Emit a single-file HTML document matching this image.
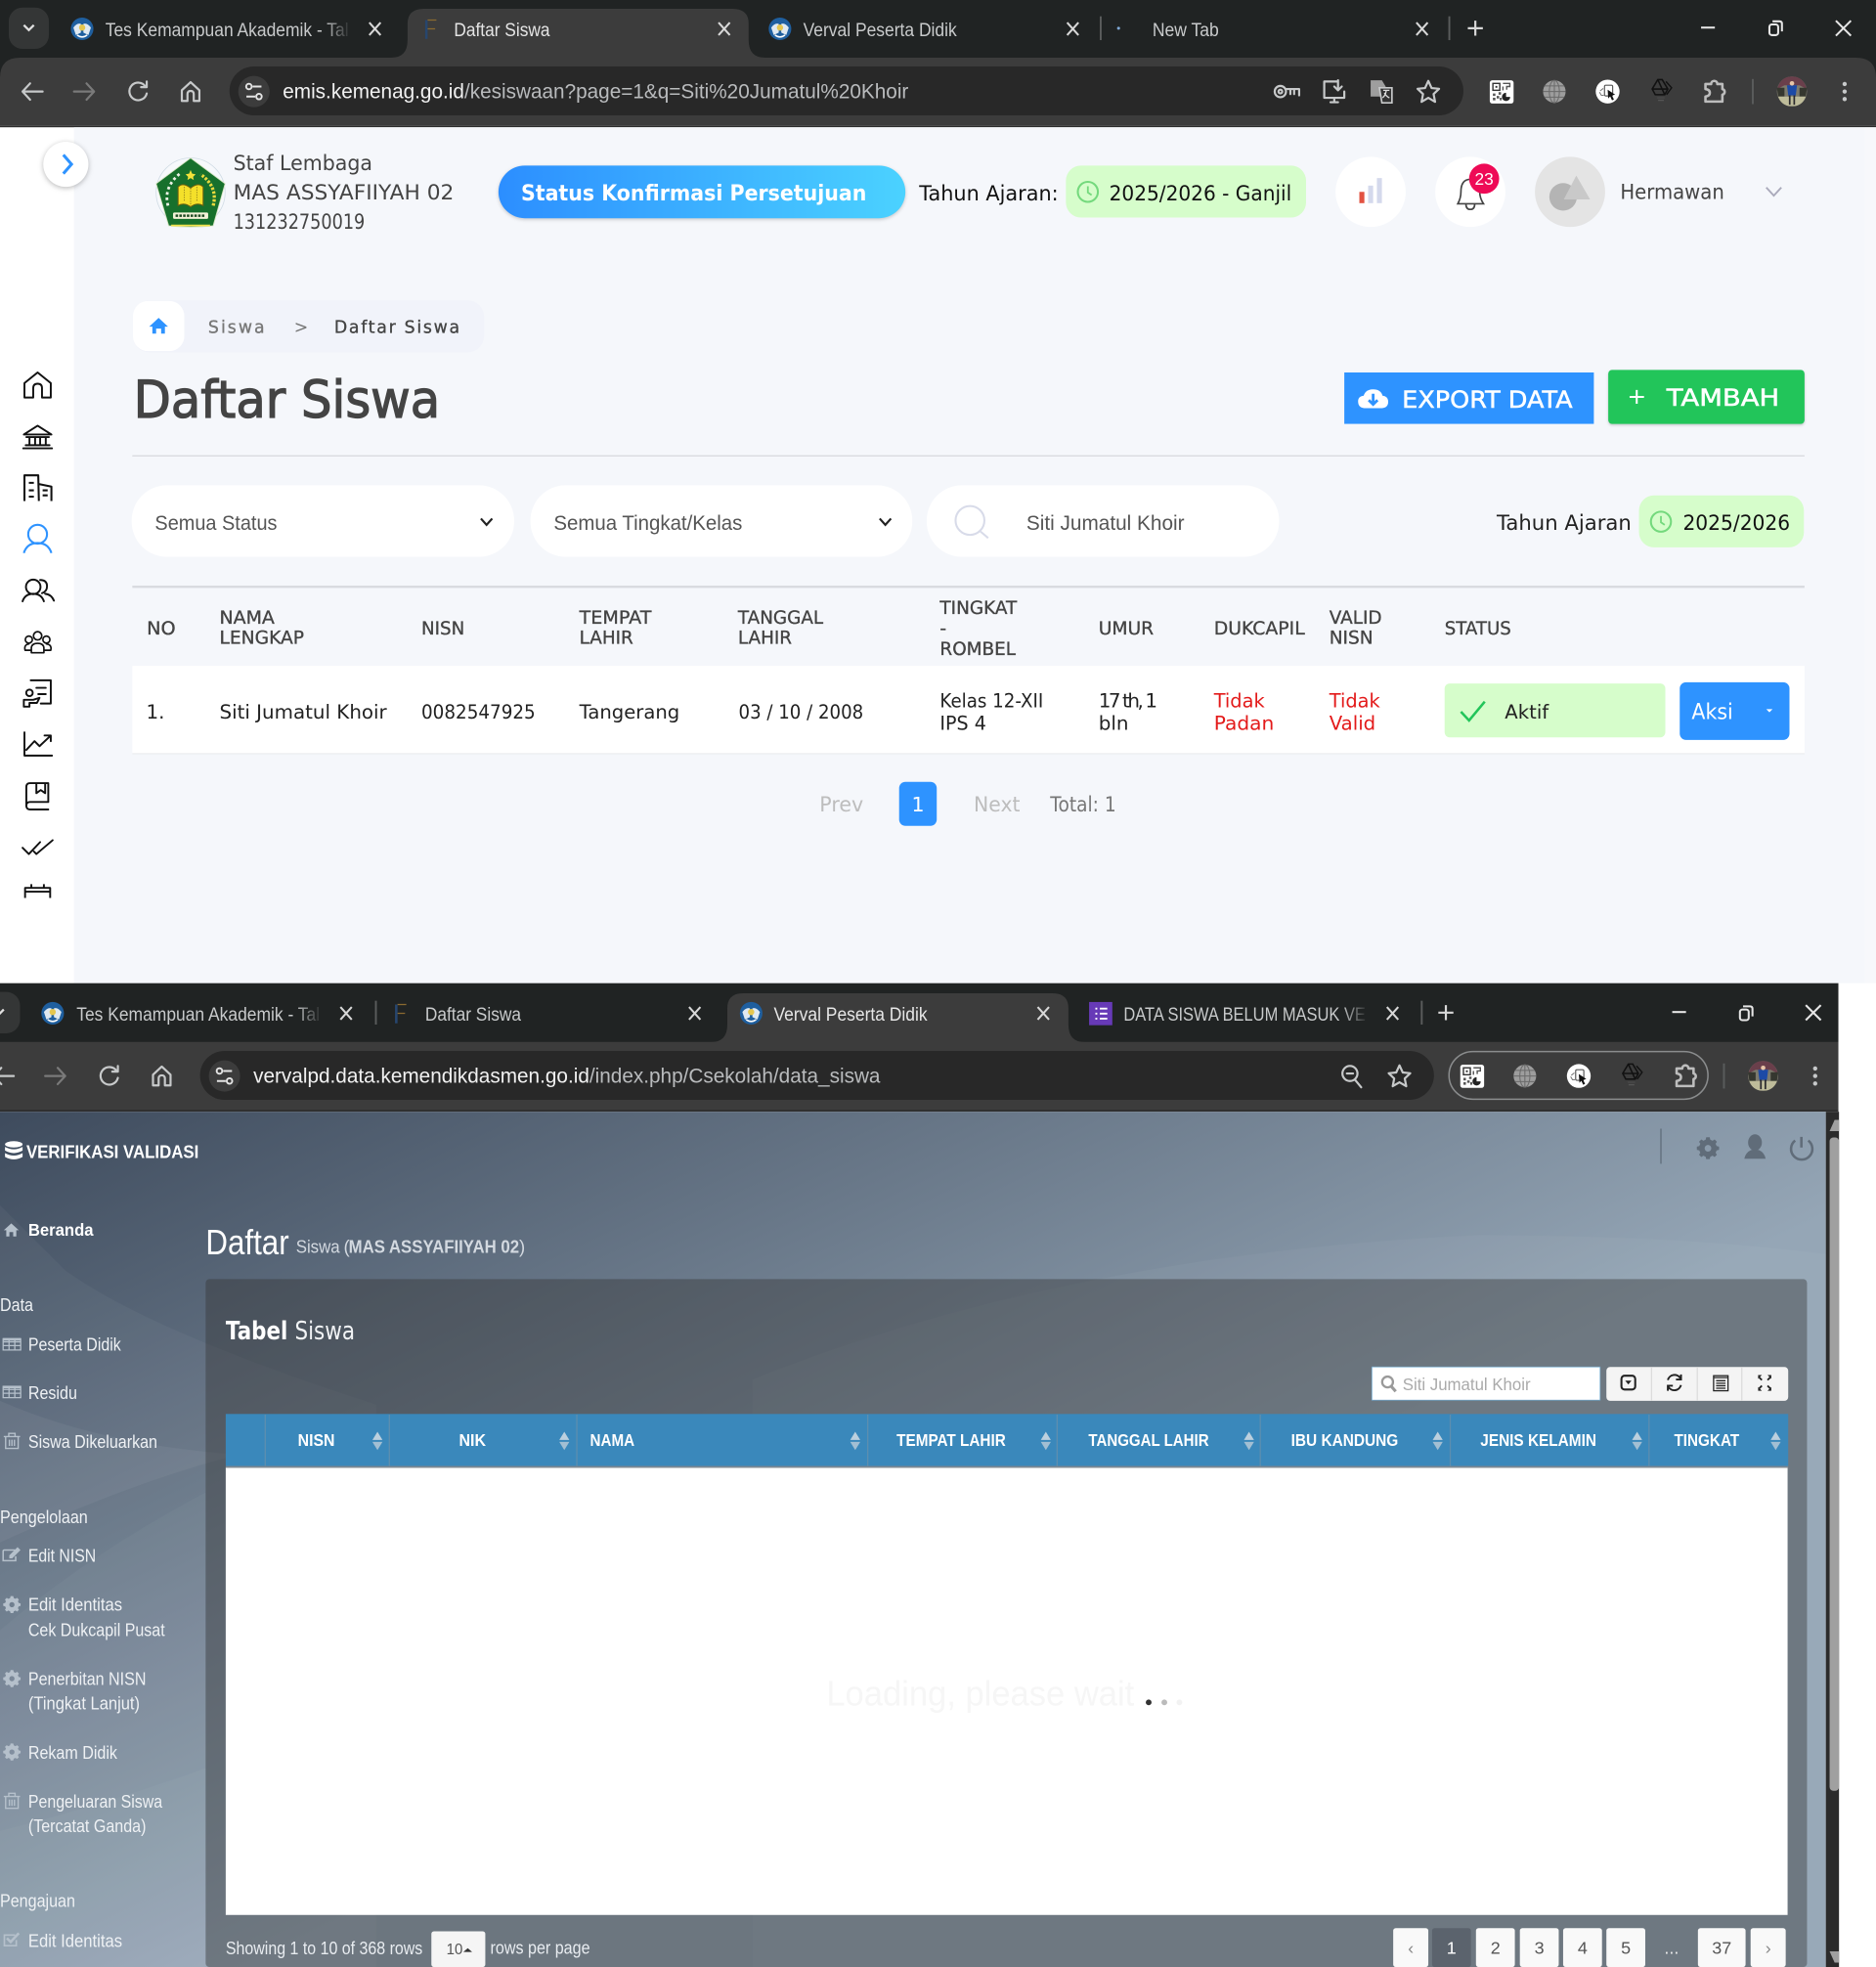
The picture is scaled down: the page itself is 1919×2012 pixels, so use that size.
<!DOCTYPE html>
<html><head><meta charset="utf-8"><title>Daftar Siswa</title>
<style>
html,body{margin:0;padding:0;background:#fff;width:1919px;height:2012px;overflow:hidden}
svg{display:block}
.c{font-family:"Liberation Sans",sans-serif;font-size:15px;fill:#c8cacb}
.u{font-family:"Liberation Sans",sans-serif;font-size:16.5px;fill:#b9bbbd}
.m{font-family:"DejaVu Sans",sans-serif;font-size:15.5px;fill:#222}
.h{font-family:"DejaVu Sans",sans-serif;font-size:14.5px;fill:#444;stroke:#444;stroke-width:.25}
.n{font-family:"Liberation Sans",sans-serif;font-size:17px;fill:#555}
.s{font-family:"Liberation Sans",sans-serif;font-size:14.5px;fill:#eef1f4}
.o{font-family:"Liberation Sans",sans-serif;font-size:14.5px;fill:#fff;font-weight:bold}
.ch{fill:none;stroke:#c7c9ca;stroke-width:1.7;stroke-linecap:round;stroke-linejoin:round}
.sb{fill:none;stroke:#111;stroke-width:1.5;stroke-linejoin:round;stroke-linecap:round}
</style></head><body>
<svg xmlns="http://www.w3.org/2000/svg" width="1919" height="2012" viewBox="0 0 1496 1568.5">
<defs>
<linearGradient id="st" x1="0" x2="1" y1="0" y2="0"><stop offset="0" stop-color="#2c8eff"/><stop offset="1" stop-color="#4bd2ff"/></linearGradient>
<linearGradient id="bg" gradientUnits="userSpaceOnUse" x1="0" y1="886" x2="300" y2="1519"><stop offset="0" stop-color="#3e4b5d"/><stop offset="1" stop-color="#95a6b6"/></linearGradient>
<linearGradient id="fd" x1="0" x2="1" y1="0" y2="0"><stop offset="0" stop-color="#202323" stop-opacity="0"/><stop offset="1" stop-color="#202323"/></linearGradient>

<g id="x"><path d="M-4.500 -5L4.500 5M4.500 -5L-4.500 5" fill="none" stroke="#d8d8d8" stroke-width="1.600"/></g>
<g id="tw"><circle r="9" fill="#1f5f9f"/><path d="M-7 -1Q-4 -5 -1 -4V3L-5 5ZM7 -1Q4 -5 1 -4V3L5 5Z" fill="#dfe9f2"/><circle cy="-1" r="2.500" fill="#e5c64f"/><path d="M-4 5Q0 8 4 5" stroke="#fff" stroke-width="1.200" fill="none"/></g>
<g id="ef"><path d="M-5 -8H-3V7H-5Z" fill="#27466e"/><path d="M-3 -8H4M-3 -1H3" stroke="#8a6a30" stroke-width="1" fill="none"/></g>
<g id="back"><path class="ch" d="M8 0H-8M-2 -6.500L-8 0L-2 6.500"/></g>
<g id="fwd"><path class="ch" style="stroke:#7a7a7a" d="M-8 0H8M2 -6.500L8 0L2 6.500"/></g>
<g id="rel"><path class="ch" d="M6 -4A7 7 0 1 0 7 1.500M7 -8V-3.500H2.500"/></g>
<g id="home"><path class="ch" d="M-7 -1L0 -7.500L7 -1V7.500H2.500V2Q2.500 -.500 0 -.500 -2.500 -.500 -2.500 2V7.500H-7Z"/></g>
<g id="info"><circle r="12.500" fill="#3c3c3c"/><path d="M-1 -4H6M1 4H-6" stroke="#e4e4e4" stroke-width="1.600"/><circle cx="-4" cy="-4" r="2.200" fill="none" stroke="#e4e4e4" stroke-width="1.500"/><circle cx="4" cy="4" r="2.200" fill="none" stroke="#e4e4e4" stroke-width="1.500"/></g>
<g id="star"><path class="ch" d="M0 -8.500L2.600 -2.800 8.600 -2.200 4.200 2 5.400 8.200 0 5 -5.400 8.200 -4.200 2 -8.600 -2.200 -2.600 -2.800Z"/></g>
<g id="qr"><rect x="-9.500" y="-9" width="19" height="18.500" rx="2" fill="#fff"/><rect x="-7" y="-6.500" width="5.500" height="5.500" fill="none" stroke="#333" stroke-width="1.100"/><rect x="-5" y="-4.500" width="1.500" height="1.500" fill="#333"/><path d="M1 -6.500H6.500V-4H4V-1.500M1 -4V-1" fill="none" stroke="#555" stroke-width="1.100"/><path d="M-7 1.500h2v2h-2zM-4 3.500h2v2h-2zM-7 5h2v2h-2zM-2.500 .500h2v2h-2zM-1.500 5h1.500v2h-1.500z" fill="#555"/><path d="M3.500 1A3.300 3.300 0 1 0 6.800 4.300H3.500Z" fill="#222"/></g>
<g id="gl"><circle r="9" fill="#9d9d9d"/><ellipse rx="4" ry="9" fill="none" stroke="#6a6a6a" stroke-width=".8"/><path d="M-9 0H9M-8 -4.500H8M-8 4.500H8M0 -9V9" stroke="#6a6a6a" stroke-width=".8"/></g>
<g id="cur"><circle r="9.500" fill="#fff"/><rect x="-2.500" y="-5" width="6.500" height="8.500" rx="1" fill="none" stroke="#555" stroke-width=".9"/><path d="M-6 -.500L-3.500 -2.500M-6.500 .500L-5 3 -3 3" fill="none" stroke="#777" stroke-width=".8"/><path d="M0 -1.500L6 2.500 3.400 3 5 6.300 3.500 7 2 3.800 .500 5.500Z" fill="#111"/></g>
<g id="dr"><path d="M-2.500 -8.500H1L5.500 -1 3 3.500H-4.500L-7 -1ZM-2.500 -8.500L3 3.500M-7 -1H5.500" fill="none" stroke="#111" stroke-width="1.200"/><path d="M4 -7L8.500 -2 4.500 3.500" fill="none" stroke="#111" stroke-width="1.100"/><rect x="-3" y="5.500" width="6" height="1" fill="#4a4a4a"/><rect x="-2.300" y="7.500" width="4.600" height="1" fill="#555"/></g>
<g id="pz"><path fill="none" stroke="#bdbdbd" stroke-width="2" stroke-linejoin="round" d="M-7 -6H-2.500A2.300 2.300 0 0 1 2.500 -6H6.500V-2A2.300 2.300 0 0 1 6.500 2.500V8H-7V4Q-3.500 3.500 -3.500 1 -3.500 -1.500 -7 -2Z"/></g>
<g id="ava"><circle r="12" fill="#7c7a6d"/><path d="M-11.800 -2Q-9 -12 0 -12 9 -12 11.800 -2L6 -5H-6Z" fill="#6a3f4b"/><path d="M-12 -3H-6V4H-11ZM12 -3H6V4H11Z" fill="#35372f"/><path d="M-4 -5L4 -5 3 3H-3Z" fill="#1d4aa6"/><circle cy="-6.500" r="1.800" fill="#e8c6a8"/><path d="M-2 3V10M2 3V10" stroke="#23252b" stroke-width="1.300"/><path d="M-11 4H11Q9 10 3 11.500H-3Q-9 10 -11 4Z" fill="#c5c39f" fill-opacity=".9"/><path d="M-1.800 3V10.500M1.800 3V10.500" stroke="#2a2a2e" stroke-width="1.300"/></g>
<g id="dots"><circle cy="-6" r="1.700" fill="#c7c9ca"/><circle r="1.700" fill="#c7c9ca"/><circle cy="6" r="1.700" fill="#c7c9ca"/></g>
<g id="min"><path d="M-5.500 0H5.500" stroke="#e6e6e6" stroke-width="1.600"/></g>
<g id="rst"><rect x="-5" y="-3" width="7" height="8.500" rx="2" fill="none" stroke="#e6e6e6" stroke-width="1.600"/><path d="M-2.500 -5.500H3Q5 -5.500 5 -3.500V2.500" fill="none" stroke="#e6e6e6" stroke-width="1.600"/></g>
<g id="bx"><path d="M-6 -6L6 6M6 -6L-6 6" stroke="#e6e6e6" stroke-width="1.600"/></g>
<g id="pl"><path d="M-6 0H6M0 -6V6" stroke="#d8d8d8" stroke-width="1.700"/></g>
<g id="clk"><circle r="8" fill="none" stroke="#74d97d" stroke-width="1.600"/><path d="M0 -4.500V0.500L3 2.500" fill="none" stroke="#74d97d" stroke-width="1.400"/></g>
<g id="srt"><path d="M-4 -.800L0 -7.300 4 -.800Z" fill="#bcd0de"/><path d="M-4 .800L0 7.300 4 .800Z" fill="#a2bfd3"/></g>
<g id="tb"><path d="M-7 -4H7V5H-7ZM-7 -1.500H7M-7 1.500H7M-2.300 -4V5M2.300 -4V5" fill="none" stroke="#b5c0cb" stroke-width="1"/><rect x="-7" y="-4.500" width="14" height="2" fill="#b5c0cb"/></g>
<g id="tr"><path d="M-5 -3.500H5V6H-5ZM-6.500 -3.500H6.500M-2.500 -3.500V-6H2.500V-3.500M-2 -1V4M0 -1V4M2 -1V4" fill="none" stroke="#b5c0cb" stroke-width="1.100"/></g>
<path id="gr" d="M-1.200 -6.500H1.200L1.600 -4.800 3.200 -4.100 4.600 -5 6.200 -3.400 5.300 -2 6 -.400 7.700 0V2.200L6 2.600 5.300 4.200 6.200 5.600 4.600 7.200 3.200 6.300 1.600 7 1.200 8.600H-1.200L-1.600 7-3.200 6.300-4.600 7.200-6.200 5.600-5.300 4.200-6 2.600-7.700 2.200V0L-6 -.400-5.300 -2-6.200 -3.400-4.600 -5-3.200 -4.100-1.600 -4.800ZM0 -1.200A2.300 2.300 0 1 0 .01 -1.200Z" fill-rule="evenodd" transform="translate(0,-1)"/>
</defs>

<!-- ===== WINDOW 1 ===== -->
<rect width="1496" height="1568.5" fill="#fff"/>
<rect width="1496" height="64" fill="#202323"/>
<rect x="7" y="6" width="32" height="33" rx="11" fill="#343636"/>
<path d="M19 20L23 24 27 20" fill="none" stroke="#e0e0e0" stroke-width="1.800"/>
<use href="#tw" x="65.500" y="23"/>
<text class="c" x="84" y="29" textLength="194" lengthAdjust="spacingAndGlyphs">Tes Kemampuan Akademik - Tal</text>
<rect x="258" y="12" width="22" height="24" fill="url(#fd)"/>
<use href="#x" x="299" y="23"/>
<path d="M312 46Q325 46 325 32V19Q325 7 338 7H584Q597 7 597 19V32Q597 46 610 46Z" fill="#3c3c3c"/>
<use href="#ef" x="344" y="24"/>
<text class="c" x="362" y="29" textLength="76.500" lengthAdjust="spacingAndGlyphs" style="fill:#e4e4e4">Daftar Siswa</text>
<use href="#x" x="577.500" y="23"/>
<use href="#tw" x="622" y="23"/>
<text class="c" x="640.500" y="29" textLength="122.500" lengthAdjust="spacingAndGlyphs">Verval Peserta Didik</text>
<use href="#x" x="855.500" y="23"/>
<rect x="877" y="13" width="1.500" height="19" fill="#5a5c5c"/>
<circle cx="892" cy="22.500" r="1.200" fill="#7fa9d6"/>
<text class="c" x="919" y="29" textLength="53" lengthAdjust="spacingAndGlyphs">New Tab</text>
<use href="#x" x="1134" y="23"/>
<rect x="1155" y="13" width="1.500" height="19" fill="#5a5c5c"/>
<use href="#pl" x="1176.500" y="22.500"/>
<use href="#min" x="1362" y="22"/><use href="#rst" x="1416" y="22.500"/><use href="#bx" x="1470" y="22.500"/>

<path d="M0 62Q0 46 16 46H1480Q1496 46 1496 62V100H0Z" fill="#3c3c3c"/>
<rect y="100" width="1496" height="1.500" fill="#2e2e2e"/>
<rect x="183" y="53" width="984" height="39" rx="19.500" fill="#282828"/>
<use href="#back" x="26" y="73"/><use href="#fwd" x="67" y="73"/><use href="#rel" x="110" y="73"/><use href="#home" x="152" y="73"/>
<use href="#info" x="202.500" y="73"/>
<text class="u" x="225.500" y="78.500" textLength="499" lengthAdjust="spacingAndGlyphs"><tspan style="fill:#f1f1f1">emis.kemenag.go.id</tspan>/kesiswaan?page=1&amp;q=Siti%20Jumatul%20Khoir</text>
<g class="ch" transform="translate(1026,73)"><circle cx="-5" cy="0" r="4.500"/><circle cx="-5" cy="0" r="1.500"/><path d="M-.5 -2H10V3M6 -2V2M3 -2V2"/></g>
<g class="ch" transform="translate(1064,73)"><path d="M2 -8H-8V5H8V0M-3 8.500H3M0 5V8.500"/><path d="M3 -9V-1M0 -4L3 -1 6 -4"/></g>
<g transform="translate(1101,73)"><path d="M-8 -9H1L4 -4V4H-8Z" fill="#9e9e9e"/><path d="M-1 -3H9V9H1Z" fill="#333" stroke="#c7c9ca" stroke-width="1.300"/><path d="M2 -1H7M4.500 -1Q4 3 1.500 5M3 1Q4.500 4 7 5" stroke="#ddd" fill="none"/></g>
<use href="#star" x="1139" y="73"/>
<use href="#qr" x="1197.500" y="73"/><use href="#gl" x="1239.500" y="73"/><use href="#cur" x="1282" y="73"/><use href="#dr" x="1324.500" y="72"/><use href="#pz" x="1367" y="73"/>
<rect x="1397" y="63" width="1.500" height="20" fill="#5a5c5c"/>
<use href="#ava" x="1429" y="73"/><use href="#dots" x="1471" y="73"/>

<!-- page 1 body -->
<rect x="59" y="101.500" width="1428" height="682.500" fill="#f5f7fb"/>
<rect x="1487" y="101.500" width="9" height="682.500" fill="#f7f8fb"/>
<circle cx="52.500" cy="131" r="18" fill="#fff" style="filter:drop-shadow(0 1px 2px rgba(0,0,0,.28))"/>
<path d="M50.500 123.500L57 131 50.500 138.500" fill="none" stroke="#2e93ff" stroke-width="2.400"/>

<!-- sidebar icons -->
<path class="sb" d="M19.500 305L30 296.500 40.500 305V316.500H33.500V309Q33.500 305.500 30 305.500 26.500 305.500 26.500 309V316.500H19.500Z" transform="translate(0,.5)"/>
<path class="sb" d="M19 346.500L30 339.500 41 346.500ZM21 348.500H39M23.500 349V354.500M28 349V354.500M32 349V354.500M36.500 349V354.500M20.500 355H39.500M18.500 357.500H41.500"/>
<path class="sb" style="stroke-linecap:butt;stroke-width:1.600" d="M19.500 399.500V379H30.500L31 399.500M31 386L41 388V399.500M23 385H27M23 391H27M23 396H27M34 391H38M34 395H38"/>
<g fill="none" stroke="#2e93ff" stroke-width="1.600"><circle cx="30" cy="426" r="7.500"/><path d="M19 441Q21.500 433 30 433 38.500 433 41 441"/></g>
<g class="sb"><circle cx="26.500" cy="468" r="5.800"/><path d="M18 479.500Q20 473.500 26.500 473.500 33 473.500 35 479.500M32 462.500Q37.500 462.500 37.500 467.500 37.500 471.500 33.500 473M36 473.500Q41 474 43 479"/></g>
<g class="sb" style="stroke-width:1.300"><circle cx="30" cy="507" r="3.300"/><circle cx="23" cy="510" r="2.800"/><circle cx="37" cy="510" r="2.800"/><path d="M25 520.500V517Q25 513 30 513 35 513 35 517V520.500ZM25 518.500H20Q19 514 23 513.500M35 518.500H40.500Q41.500 514 37 513.500"/></g>
<g class="sb" transform="translate(-.5,-.5)"><path d="M25 543H41V561.500H33M29.500 549H37M31 554H37M19.500 564V558.500H27L32 557 30 561H24V564Z"/><circle cx="24" cy="553" r="2.600"/></g>
<path class="sb" d="M19.500 584V602.500H41.500M21 598L27.500 591 31.500 595 40 587M35.500 586.500H40.500V591"/>
<path class="sb" d="M21 643.500V628Q21 625 24 625H38.500V640H24Q21 640 21 643 21 646 24 646H38.500M29 625V633L32.500 630.500 36 633V625" transform="translate(0,-.500)"/>
<path class="sb" d="M18 676L23 681 32 671.500M27 679L29 681 42 670"/>
<path class="sb" d="M20 716V708H40V716M25 708V705M35 708V705M20 711H40" style="stroke-linecap:butt"/>

<!-- header: Kemenag logo -->
<g transform="translate(152,153)">
<circle r="27.500" cy=".5" fill="#f7f9fc" stroke="#cfdbe4" stroke-width=".6"/>
<path d="M0 -27L27.500 -6.500 18 27Q0 29 -17.500 27L-27.500 -6.500Z" fill="#17702c" stroke="#d8e6c4" stroke-width=".7"/>
<path d="M-18 11Q-22 -4 -8 -15" fill="none" stroke="#eef2e6" stroke-width="2.200" stroke-dasharray="2.200 2.200"/>
<path d="M18 11Q22 -4 8 -14" fill="none" stroke="#e8d93e" stroke-width="2.600" stroke-dasharray="2 1.200"/>
<path d="M0 -17.500L1.200 -14.500 4 -14 2 -12 2.500 -9.500 0 -11 -2.500 -9.500 -2 -12 -4 -14 -1.200 -14.500Z" fill="#f2e23a"/>
<path d="M0 -3Q-6 -8 -10 -4V11Q-5 8 0 12 5 8 10 11V-4Q6 -8 0 -3Z" fill="#f4e02a" stroke="#6a5e10" stroke-width=".8"/>
<path d="M0 -3V12M-5 -4V8M5 -4V8" stroke="#8a7a18" stroke-width=".7" stroke-dasharray="1 1"/>
<rect x="-14" y="16.500" width="28" height="5" rx="1" fill="#f4f2d8"/>
<path d="M-12 19H12" stroke="#1d4a22" stroke-width="2" stroke-dasharray="2 1"/>
<path d="M-15.500 26.800H15.500" stroke="#efe04a" stroke-width="1.300"/>
</g>
<text class="m" x="186" y="135.500" textLength="111" lengthAdjust="spacingAndGlyphs" style="font-size:16.500px;fill:#444">Staf Lembaga</text>
<text class="m" x="186" y="159" textLength="176" lengthAdjust="spacingAndGlyphs" style="font-size:16.500px;fill:#444">MAS ASSYAFIIYAH 02</text>
<text class="m" x="186" y="182.500" textLength="105" lengthAdjust="spacingAndGlyphs" style="font-size:16.500px;fill:#444">131232750019</text>
<rect x="397.500" y="132" width="324.500" height="42" rx="21" fill="url(#st)" style="filter:drop-shadow(0 1px 1.500px rgba(0,0,0,.2))"/>
<text x="415.500" y="160" textLength="275.500" lengthAdjust="spacingAndGlyphs" style="font-family:'DejaVu Sans',sans-serif;font-weight:bold;font-size:17.500px;fill:#fff">Status Konfirmasi Persetujuan</text>
<text class="m" x="733" y="160" textLength="111" lengthAdjust="spacingAndGlyphs" style="font-size:16.500px;fill:#111">Tahun Ajaran:</text>
<rect x="850" y="132" width="191.500" height="41.500" rx="12" fill="#d6fdcb"/>
<use href="#clk" x="867.500" y="153"/>
<text class="m" x="884.500" y="160" textLength="145.500" lengthAdjust="spacingAndGlyphs" style="font-size:16.500px;fill:#111">2025/2026 - Ganjil</text>
<circle cx="1093" cy="153" r="28" fill="#fff"/>
<rect x="1084" y="153" width="4" height="9" fill="#e25241"/><rect x="1091" y="148" width="4" height="14" fill="#d4d9ec"/><rect x="1098" y="142" width="4" height="20" fill="#d4d9ec"/>
<circle cx="1172.500" cy="153" r="28" fill="#fff"/>
<path d="M1162.500 162.500Q1165 158 1165 153 1165 143 1172.500 143 1180 143 1180 153 1180 158 1183 162.500ZM1169 162.500Q1169 167 1172.500 167 1176 167 1176 162.500" fill="none" stroke="#444" stroke-width="1.300"/>
<circle cx="1183.500" cy="142.500" r="12" fill="#ee0a56"/>
<text x="1183.500" y="147.500" text-anchor="middle" style="font-family:'Liberation Sans',sans-serif;font-size:13.500px;fill:#fff">23</text>
<circle cx="1252" cy="153" r="28" fill="#e4e4e4"/>
<circle cx="1246.500" cy="157" r="11" fill="#b4b4b4"/><path d="M1257 140L1268 159H1247Z" fill="#c9c9c9"/>
<text class="n" x="1292" y="158.500" textLength="83" lengthAdjust="spacingAndGlyphs" style="font-size:16.500px;fill:#444;font-family:'DejaVu Sans',sans-serif">Hermawan</text>
<path d="M1408.500 149.500L1414.500 156 1420.500 149.500" fill="none" stroke="#aab" stroke-width="1.500"/>

<!-- breadcrumb -->
<rect x="106" y="239.500" width="280" height="41.500" rx="13" fill="#f1f3fa"/>
<rect x="106" y="240" width="41" height="40" rx="12" fill="#fff"/>
<path d="M126.500 253.500L134 260.500H131.500V266H128.500V262H124.500V266H121.500V260.500H119Z" fill="#2e93ff"/>
<text class="m" x="166" y="265.500" textLength="45" lengthAdjust="spacing" style="font-size:13.500px;fill:#777;stroke:#777;stroke-width:.25">Siswa</text>
<text class="m" x="234.500" y="265.500" style="font-size:13.500px;fill:#777">&gt;</text>
<text class="m" x="266.500" y="265.500" textLength="100" lengthAdjust="spacing" style="font-size:13.500px;fill:#444;stroke:#444;stroke-width:.25">Daftar Siswa</text>

<text x="106.500" y="333" textLength="244.500" lengthAdjust="spacingAndGlyphs" style="font-family:'DejaVu Sans',sans-serif;font-size:41px;fill:#444;stroke:#444;stroke-width:1">Daftar Siswa</text>
<rect x="1072" y="297" width="199" height="41" fill="#2e93ff"/>
<path d="M1088 325.500Q1083 325 1083 320 1083 316 1087.500 315.500 1089 310.500 1095 310.500 1101 310.500 1102.500 315.500 1107 316 1107 320.500 1107 325 1102 325.500Z" fill="#fff"/>
<path d="M1095 314V322M1091.500 319L1095 322.500 1098.500 319" stroke="#2e93ff" stroke-width="2.200" fill="none"/>
<text x="1118" y="325" textLength="136" lengthAdjust="spacingAndGlyphs" style="font-family:'DejaVu Sans',sans-serif;font-size:19px;fill:#fff;stroke:#fff;stroke-width:.4">EXPORT DATA</text>
<rect x="1282.500" y="295" width="156.500" height="43" rx="3" fill="#22c55a" style="filter:drop-shadow(0 1px 1px rgba(0,0,0,.2))"/>
<path d="M1299.500 316.500H1311M1305.200 311V322" stroke="#fff" stroke-width="1.600"/>
<text x="1329" y="323.500" textLength="90" lengthAdjust="spacingAndGlyphs" style="font-family:'DejaVu Sans',sans-serif;font-size:19px;fill:#fff;stroke:#fff;stroke-width:.4">TAMBAH</text>
<rect x="105.500" y="363" width="1333.500" height="1" fill="#d7d9dd"/>

<!-- filters -->
<rect x="105" y="387" width="305" height="57" rx="28" fill="#fff"/>
<text class="n" x="123.500" y="422.500" textLength="97.500" lengthAdjust="spacingAndGlyphs" style="font-size:16.500px">Semua Status</text>
<path d="M383.500 413.500L388 418.500 392.500 413.500" fill="none" stroke="#222" stroke-width="1.700"/>
<rect x="423" y="387" width="304.500" height="57" rx="28" fill="#fff"/>
<text class="n" x="441.500" y="422.500" textLength="150.500" lengthAdjust="spacingAndGlyphs" style="font-size:16.500px">Semua Tingkat/Kelas</text>
<path d="M701.500 413.500L706 418.500 710.500 413.500" fill="none" stroke="#222" stroke-width="1.700"/>
<rect x="739" y="387" width="281" height="57" rx="28" fill="#fff"/>
<circle cx="773.500" cy="415" r="11.500" fill="none" stroke="#d8dbe9" stroke-width="1.600"/><path d="M781.500 423.500L788 429" stroke="#d8dbe9" stroke-width="1.600"/>
<text class="n" x="818.500" y="422.500" textLength="126" lengthAdjust="spacingAndGlyphs" style="font-size:16.500px">Siti Jumatul Khoir</text>
<text class="m" x="1193.500" y="422.500" textLength="107.500" lengthAdjust="spacingAndGlyphs" style="font-size:16.500px;fill:#222">Tahun Ajaran</text>
<rect x="1307" y="395" width="131.500" height="41.500" rx="12" fill="#d6fdcb"/>
<use href="#clk" x="1324.500" y="416"/>
<text class="m" x="1342" y="422.500" textLength="85.500" lengthAdjust="spacingAndGlyphs" style="font-size:16.500px;fill:#111">2025/2026</text>

<!-- table 1 -->
<rect x="105.500" y="467" width="1333.500" height="1.800" fill="#d8dadf"/>
<text class="h" x="117" y="506" textLength="23" lengthAdjust="spacingAndGlyphs">NO</text>
<text class="h" x="175" y="497.500" textLength="44" lengthAdjust="spacingAndGlyphs">NAMA</text>
<text class="h" x="175" y="513.500" textLength="67.500" lengthAdjust="spacingAndGlyphs">LENGKAP</text>
<text class="h" x="336" y="506" textLength="34.500" lengthAdjust="spacingAndGlyphs">NISN</text>
<text class="h" x="462" y="497.500" textLength="57.500" lengthAdjust="spacingAndGlyphs">TEMPAT</text>
<text class="h" x="462" y="513.500" textLength="43" lengthAdjust="spacingAndGlyphs">LAHIR</text>
<text class="h" x="588.500" y="497.500" textLength="68" lengthAdjust="spacingAndGlyphs">TANGGAL</text>
<text class="h" x="588.500" y="513.500" textLength="43" lengthAdjust="spacingAndGlyphs">LAHIR</text>
<text class="h" x="749.500" y="489.500" textLength="61.500" lengthAdjust="spacingAndGlyphs">TINGKAT</text>
<text class="h" x="749.500" y="506">-</text>
<text class="h" x="749.500" y="522.500" textLength="60.500" lengthAdjust="spacingAndGlyphs">ROMBEL</text>
<text class="h" x="876" y="506" textLength="44" lengthAdjust="spacingAndGlyphs">UMUR</text>
<text class="h" x="968" y="506" textLength="72.500" lengthAdjust="spacingAndGlyphs">DUKCAPIL</text>
<text class="h" x="1060" y="497.500" textLength="42" lengthAdjust="spacingAndGlyphs">VALID</text>
<text class="h" x="1060" y="513.500" textLength="35" lengthAdjust="spacingAndGlyphs">NISN</text>
<text class="h" x="1152" y="506" textLength="53" lengthAdjust="spacingAndGlyphs">STATUS</text>

<rect x="105.500" y="531" width="1333.500" height="70" fill="#fff"/>
<rect x="105.500" y="600.500" width="1333.500" height="1" fill="#ebedf0"/>
<text class="m" x="116.500" y="573">1.</text>
<text class="m" x="175" y="573" textLength="133.500" lengthAdjust="spacingAndGlyphs">Siti Jumatul Khoir</text>
<text class="m" x="336" y="573" textLength="91" lengthAdjust="spacingAndGlyphs">0082547925</text>
<text class="m" x="462" y="573" textLength="80" lengthAdjust="spacingAndGlyphs">Tangerang</text>
<text class="m" x="589" y="573" textLength="99.500" lengthAdjust="spacingAndGlyphs">03 / 10 / 2008</text>
<text class="m" x="749.500" y="564" textLength="82.500" lengthAdjust="spacingAndGlyphs">Kelas 12-XII</text>
<text class="m" x="749.500" y="582" textLength="37" lengthAdjust="spacingAndGlyphs">IPS 4</text>
<text class="m" x="876" y="564" textLength="47" lengthAdjust="spacing">17 th, 1</text>
<text class="m" x="876" y="582" textLength="24" lengthAdjust="spacingAndGlyphs">bln</text>
<text class="m" x="968" y="564" textLength="40.500" lengthAdjust="spacingAndGlyphs" style="fill:#e31a1a">Tidak</text>
<text class="m" x="968" y="582" textLength="48" lengthAdjust="spacingAndGlyphs" style="fill:#e31a1a">Padan</text>
<text class="m" x="1060" y="564" textLength="40.500" lengthAdjust="spacingAndGlyphs" style="fill:#e31a1a">Tidak</text>
<text class="m" x="1060" y="582" textLength="37" lengthAdjust="spacingAndGlyphs" style="fill:#e31a1a">Valid</text>
<rect x="1152" y="545" width="176" height="43" rx="4" fill="#d6fdcb"/>
<path d="M1165 567.500L1171.500 574.500 1184 559.500" fill="none" stroke="#22c55a" stroke-width="2"/>
<text class="m" x="1200" y="573" textLength="35" lengthAdjust="spacingAndGlyphs">Aktif</text>
<rect x="1339.500" y="544" width="87.500" height="46" rx="5" fill="#2e93ff"/>
<text class="m" x="1349" y="573.500" textLength="33" lengthAdjust="spacingAndGlyphs" style="fill:#fff;font-size:17px">Aksi</text>
<path d="M1408.500 565.500H1413.500L1411 568Z" fill="#fff"/>
<text class="m" x="653.500" y="647" textLength="35" lengthAdjust="spacingAndGlyphs" style="fill:#bdbdbd;font-size:16.500px">Prev</text>
<rect x="717" y="623.500" width="30" height="35" rx="5" fill="#2e93ff"/>
<text class="m" x="732" y="647" text-anchor="middle" style="fill:#fff;font-size:16px">1</text>
<text class="m" x="776.500" y="647" textLength="37" lengthAdjust="spacingAndGlyphs" style="fill:#bdbdbd;font-size:16.500px">Next</text>
<text class="m" x="837.500" y="647" textLength="52.500" lengthAdjust="spacingAndGlyphs" style="fill:#777;font-size:16.500px">Total: 1</text>

<!-- ===== WINDOW 2 ===== -->
<rect x="0" y="784" width="1466" height="47" fill="#202323"/>
<rect x="-16" y="791" width="32" height="33" rx="11" fill="#343636"/>
<path d="M-3 805L0 808 3 805" fill="none" stroke="#e0e0e0" stroke-width="1.800"/>
<use href="#tw" x="42" y="808"/>
<text class="c" x="61" y="814" textLength="194" lengthAdjust="spacingAndGlyphs">Tes Kemampuan Akademik - Tal</text>
<rect x="235" y="797" width="22" height="24" fill="url(#fd)"/>
<use href="#x" x="276" y="808"/>
<rect x="299" y="798" width="1.500" height="19" fill="#5a5c5c"/>
<use href="#ef" x="320" y="809"/>
<text class="c" x="339" y="814" textLength="76.500" lengthAdjust="spacingAndGlyphs">Daftar Siswa</text>
<use href="#x" x="554" y="808"/>
<path d="M567 831Q580 831 580 817V804Q580 792 593 792H839Q852 792 852 804V817Q852 831 865 831Z" fill="#3c3c3c"/>
<use href="#tw" x="599" y="808"/>
<text class="c" x="617" y="814" textLength="122.500" lengthAdjust="spacingAndGlyphs" style="fill:#e6e6e6">Verval Peserta Didik</text>
<use href="#x" x="832" y="808"/>
<rect x="868.500" y="799" width="18.500" height="18.500" fill="#673ab7"/>
<path d="M873.500 803.500h1.500v1.500h-1.500zM877 803.500h6v1.500h-6zM873.500 807.500h1.500v1.500h-1.500zM877 807.500h6v1.500h-6zM873.500 811.500h1.500v1.500h-1.500zM877 811.500h6v1.500h-6z" fill="#fff"/>
<text class="c" x="896" y="814" textLength="193" lengthAdjust="spacingAndGlyphs">DATA SISWA BELUM MASUK VE</text>
<rect x="1070" y="797" width="21" height="24" fill="url(#fd)"/>
<use href="#x" x="1110.500" y="808"/>
<rect x="1133" y="798" width="1.500" height="19" fill="#5a5c5c"/>
<use href="#pl" x="1153" y="807.500"/>
<use href="#min" x="1339" y="807"/><use href="#rst" x="1392.500" y="808"/><use href="#bx" x="1446" y="807.500"/>

<rect x="0" y="831" width="1466" height="55" fill="#3c3c3c"/>
<rect x="0" y="885" width="1466" height="1.500" fill="#2e2e2e"/>
<rect x="159.500" y="838" width="984" height="39" rx="19.500" fill="#282828"/>
<use href="#back" x="3" y="858"/><use href="#fwd" x="44" y="858"/><use href="#rel" x="87" y="858"/><use href="#home" x="129" y="858"/>
<use href="#info" x="179" y="858"/>
<text class="u" x="202" y="863.500" textLength="500" lengthAdjust="spacingAndGlyphs"><tspan style="fill:#f1f1f1">vervalpd.data.kemendikdasmen.go.id</tspan>/index.php/Csekolah/data_siswa</text>
<g class="ch" transform="translate(1078,858)"><circle cx="-1.500" cy="-2" r="6"/><path d="M2.500 3L7.500 9M-4 -2H1"/></g>
<use href="#star" x="1116" y="858"/>
<rect x="1155.500" y="838.500" width="206.500" height="38" rx="19" fill="none" stroke="#8a8c8d" stroke-width="1.200"/>
<use href="#qr" x="1174" y="858"/><use href="#gl" x="1216" y="858"/><use href="#cur" x="1259" y="858"/><use href="#dr" x="1301" y="857"/><use href="#pz" x="1344" y="858"/>
<rect x="1374" y="848" width="1.500" height="20" fill="#5a5c5c"/>
<use href="#ava" x="1406" y="858"/><use href="#dots" x="1447.500" y="858"/>

<!-- page 2 -->
<rect x="0" y="886.500" width="1456" height="682" fill="url(#bg)"/>
<path d="M0 961L52 1013Q120 1062 300 1120L300 1568.500H0Z" fill="#fff" opacity=".04"/>
<path d="M0 1117Q80 1152 190 1160Q110 1180 0 1230Z" fill="#fff" opacity=".05"/>
<path d="M0 1300Q70 1240 164 1190V1568.500H0Z" fill="#fff" opacity=".03"/>
<path d="M0 1460Q80 1440 164 1410V1568.500H0Z" fill="#fff" opacity=".03"/>
<path d="M600 1100Q850 1000 1178 985Q1340 985 1456 1000V1568.500H600Z" fill="#fff" opacity=".035"/>
<rect x="1456" y="886.500" width="10.500" height="682" fill="#2b2b2b"/>
<rect x="1459" y="907" width="7.500" height="521" rx="3" fill="#a0a0a0"/>
<path d="M1459 902L1463 893 1466.500 893V902Z" fill="#a0a0a0"/>
<path d="M1459 1556H1466.500V1565H1463Z" fill="#a0a0a0"/>

<!-- topbar 2 -->
<g fill="#fff"><ellipse cx="11" cy="912.500" rx="7" ry="2.500"/><path d="M4 914.500Q11 918.500 18 914.500V917.500Q11 921.500 4 917.500ZM4 919.500Q11 923.500 18 919.500V922.500Q11 926.500 4 922.500Z"/></g>
<text class="o" x="21" y="923.500" textLength="137.500" lengthAdjust="spacingAndGlyphs">VERIFIKASI VALIDASI</text>
<rect x="1324" y="900" width="1" height="28" fill="#5f6c7a"/>
<use href="#gr" transform="translate(1362,915.500) scale(1.150)" fill="#606c79"/>
<g fill="#606c79"><ellipse cx="1399.500" cy="911" rx="5.500" ry="6.500"/><path d="M1391 924Q1392 919 1396.500 917H1402.500Q1407 919 1408 924Z"/></g>
<path d="M1431.500 909.500A8.500 8.500 0 1 0 1442 909.500M1436.500 906.500V915" fill="none" stroke="#606c79" stroke-width="2"/>

<!-- sidebar 2 -->
<path d="M9 975.500L15 981H13V986H10.500V982.500H7.500V986H5V981H3Z" fill="#b5c0cb"/>
<text class="o" x="22.500" y="985.500" textLength="52" lengthAdjust="spacingAndGlyphs" style="font-size:14px">Beranda</text>
<text class="s" x="0" y="1045.500" textLength="26.500" lengthAdjust="spacingAndGlyphs">Data</text>
<use href="#tb" x="9.500" y="1071.500"/>
<text class="s" x="22.500" y="1077" textLength="74" lengthAdjust="spacingAndGlyphs">Peserta Didik</text>
<use href="#tb" x="9.500" y="1109.500"/>
<text class="s" x="22.500" y="1115.500" textLength="39" lengthAdjust="spacingAndGlyphs">Residu</text>
<use href="#tr" x="9.500" y="1149"/>
<text class="s" x="22.500" y="1154.500" textLength="103" lengthAdjust="spacingAndGlyphs">Siswa Dikeluarkan</text>
<text class="s" x="0" y="1214.500" textLength="70" lengthAdjust="spacingAndGlyphs">Pengelolaan</text>
<g fill="none" stroke="#b5c0cb" stroke-width="1.200"><path d="M12 1236H3.500Q2.500 1236 2.500 1237V1244.500H12.500V1241"/><path d="M8 1240.500L14 1234.500 15.500 1236 9.500 1242H8Z" fill="#b5c0cb"/></g>
<text class="s" x="22.500" y="1245.500" textLength="54" lengthAdjust="spacingAndGlyphs">Edit NISN</text>
<use href="#gr" transform="translate(9.500,1279.500) scale(.9)" fill="#b5c0cb"/>
<text class="s" x="22.500" y="1284.500" textLength="75" lengthAdjust="spacingAndGlyphs">Edit Identitas</text>
<text class="s" x="22.500" y="1304.500" textLength="109" lengthAdjust="spacingAndGlyphs">Cek Dukcapil Pusat</text>
<use href="#gr" transform="translate(9.500,1338.500) scale(.9)" fill="#b5c0cb"/>
<text class="s" x="22.500" y="1343.500" textLength="94" lengthAdjust="spacingAndGlyphs">Penerbitan NISN</text>
<text class="s" x="22.500" y="1363" textLength="89" lengthAdjust="spacingAndGlyphs">(Tingkat Lanjut)</text>
<use href="#gr" transform="translate(9.500,1397) scale(.9)" fill="#b5c0cb"/>
<text class="s" x="22.500" y="1402.500" textLength="71" lengthAdjust="spacingAndGlyphs">Rekam Didik</text>
<use href="#tr" x="9.500" y="1436"/>
<text class="s" x="22.500" y="1441.500" textLength="107" lengthAdjust="spacingAndGlyphs">Pengeluaran Siswa</text>
<text class="s" x="22.500" y="1461" textLength="94" lengthAdjust="spacingAndGlyphs">(Tercatat Ganda)</text>
<text class="s" x="0" y="1520.500" textLength="60" lengthAdjust="spacingAndGlyphs">Pengajuan</text>
<g fill="none" stroke="#b5c0cb" stroke-width="1.300"><path d="M12 1543H3.500V1551.500H13V1547"/><path d="M5.500 1545.500L8.500 1548.500 15 1541.500" stroke-width="2"/></g>
<text class="s" x="22.500" y="1552.500" textLength="75" lengthAdjust="spacingAndGlyphs">Edit Identitas</text>

<!-- page title -->
<text x="164" y="1000" textLength="66.500" lengthAdjust="spacingAndGlyphs" style="font-family:'Liberation Sans',sans-serif;font-size:28px;fill:#fff">Daftar</text>
<text x="236" y="999" textLength="35" lengthAdjust="spacingAndGlyphs" style="font-family:'Liberation Sans',sans-serif;font-size:14.500px;fill:#d3d9e0">Siswa</text>
<text x="274" y="999" style="font-family:'Liberation Sans',sans-serif;font-size:14.500px;fill:#d3d9e0">(</text>
<text x="278" y="999" textLength="136" lengthAdjust="spacingAndGlyphs" style="font-family:'Liberation Sans',sans-serif;font-size:14.500px;font-weight:bold;fill:#d3d9e0">MAS ASSYAFIIYAH 02</text>
<text x="414" y="999" style="font-family:'Liberation Sans',sans-serif;font-size:14.500px;fill:#d3d9e0">)</text>

<!-- panel -->
<rect x="164" y="1020" width="1277" height="548.500" rx="3" fill="#353535" opacity=".42"/>
<text x="180" y="1068" textLength="49.500" lengthAdjust="spacingAndGlyphs" style="font-family:'DejaVu Sans',sans-serif;font-size:20px;font-weight:bold;fill:#fff">Tabel</text>
<text x="235" y="1068" textLength="48" lengthAdjust="spacingAndGlyphs" style="font-family:'DejaVu Sans',sans-serif;font-size:20px;fill:#f1f3f5">Siswa</text>

<rect x="1094" y="1090" width="182" height="26.500" fill="#fff" stroke="#6fa8cc" stroke-width=".6"/>
<circle cx="1106.500" cy="1102" r="4.300" fill="none" stroke="#9a9a9a" stroke-width="1.800"/><path d="M1109.500 1105.500L1113 1109.500" stroke="#9a9a9a" stroke-width="2.400"/>
<text x="1118.500" y="1108.500" textLength="102" lengthAdjust="spacingAndGlyphs" style="font-family:'Liberation Sans',sans-serif;font-size:14px;fill:#aaa">Siti Jumatul Khoir</text>
<rect x="1281" y="1090" width="145" height="27" rx="3" fill="#f4f4f4"/>
<path d="M1317 1090V1117M1353.500 1090V1117M1389 1090V1117" stroke="#dcdcdc" stroke-width="1"/>
<rect x="1293" y="1097" width="11" height="11" rx="2.500" fill="none" stroke="#222" stroke-width="1.600"/><path d="M1296 1101H1301L1298.500 1104Z" fill="#222"/>
<path d="M1330 1100.500A5.500 5.500 0 0 1 1340 1099M1340.500 1096V1100H1336.500M1340.500 1104.500A5.500 5.500 0 0 1 1330.500 1106M1330 1109V1105H1334" fill="none" stroke="#222" stroke-width="1.500"/>
<rect x="1366.500" y="1097" width="11.500" height="12" fill="none" stroke="#222" stroke-width="1"/><path d="M1366.500 1098.500H1378M1368.500 1101H1376M1368.500 1103H1376M1368.500 1105H1376M1368.500 1107H1376" stroke="#222" stroke-width="1"/>
<path d="M1402 1096.500H1405L1402 1099.500ZM1412.500 1096.500V1099.500L1409.500 1096.500ZM1402 1109V1106L1405 1109ZM1412.500 1109H1409.500L1412.500 1106ZM1403.500 1098L1405.500 1100 1404.500 1101 1402.500 1099ZM1411 1098L1409 1100 1410 1101 1412 1099ZM1403.500 1107.500L1405.500 1105.500 1404.500 1104.500 1402.500 1106.500ZM1411 1107.500L1409 1105.500 1410 1104.500 1412 1106.500Z" fill="#222"/>

<!-- table 2 -->
<rect x="180" y="1127.500" width="1246" height="41.500" fill="#3a88bb"/>
<rect x="180" y="1169" width="1246" height="2" fill="#7d8892"/>
<path d="M211.500 1128V1169M310.500 1128V1169M460 1128V1169M692 1128V1169M843 1128V1169M1005 1128V1169M1156.500 1128V1169M1315 1128V1169" stroke="#5d8eaf" stroke-width="1"/>
<text class="o" x="237.500" y="1153" textLength="29.500" lengthAdjust="spacingAndGlyphs" style="font-size:13.500px">NISN</text><use href="#srt" x="301" y="1149"/>
<text class="o" x="366" y="1153" textLength="21.500" lengthAdjust="spacingAndGlyphs" style="font-size:13.500px">NIK</text><use href="#srt" x="450" y="1149"/>
<text class="o" x="470.500" y="1153" textLength="35.500" lengthAdjust="spacingAndGlyphs" style="font-size:13.500px">NAMA</text><use href="#srt" x="682" y="1149"/>
<text class="o" x="715" y="1153" textLength="87" lengthAdjust="spacingAndGlyphs" style="font-size:13.500px">TEMPAT LAHIR</text><use href="#srt" x="834" y="1149"/>
<text class="o" x="868" y="1153" textLength="96" lengthAdjust="spacingAndGlyphs" style="font-size:13.500px">TANGGAL LAHIR</text><use href="#srt" x="996" y="1149"/>
<text class="o" x="1029.500" y="1153" textLength="85.500" lengthAdjust="spacingAndGlyphs" style="font-size:13.500px">IBU KANDUNG</text><use href="#srt" x="1146.500" y="1149"/>
<text class="o" x="1180.500" y="1153" textLength="92.500" lengthAdjust="spacingAndGlyphs" style="font-size:13.500px">JENIS KELAMIN</text><use href="#srt" x="1305.500" y="1149"/>
<text class="o" x="1335" y="1153" textLength="52" lengthAdjust="spacingAndGlyphs" style="font-size:13.500px">TINGKAT</text><use href="#srt" x="1416" y="1149"/>
<rect x="180" y="1170.500" width="1245.500" height="356.500" fill="#fff"/>
<text x="659" y="1360" textLength="245.500" lengthAdjust="spacingAndGlyphs" style="font-family:'Liberation Sans',sans-serif;font-size:28px;fill:#f6f6f6">Loading, please wait</text>
<circle cx="916" cy="1357.500" r="2.300" fill="#333"/><circle cx="928.500" cy="1357.500" r="2.300" fill="#bbb"/><circle cx="940.500" cy="1357.500" r="2.300" fill="#f2f2f2"/>

<!-- footer 2 -->
<text x="180" y="1558.500" textLength="157" lengthAdjust="spacingAndGlyphs" style="font-family:'Liberation Sans',sans-serif;font-size:14.500px;fill:#e8ecf0">Showing 1 to 10 of 368 rows</text>
<rect x="344" y="1540" width="43" height="28.500" rx="2" fill="#f5f5f5"/>
<text x="356" y="1558.500" textLength="13" lengthAdjust="spacingAndGlyphs" style="font-family:'Liberation Sans',sans-serif;font-size:12.500px;fill:#555">10</text>
<path d="M369.500 1556.500H376.500L373 1553.500Z" fill="#333"/>
<text x="391" y="1558" textLength="79.500" lengthAdjust="spacingAndGlyphs" style="font-family:'Liberation Sans',sans-serif;font-size:14.500px;fill:#e8ecf0">rows per page</text>
<g fill="#f9f9f9">
<rect x="1111" y="1537.500" width="28" height="31" rx="2"/><rect x="1177" y="1537.500" width="31" height="31" rx="2"/><rect x="1212" y="1537.500" width="31" height="31" rx="2"/><rect x="1246.500" y="1537.500" width="31" height="31" rx="2"/><rect x="1281" y="1537.500" width="31" height="31" rx="2"/><rect x="1354" y="1537.500" width="38" height="31" rx="2"/><rect x="1396" y="1537.500" width="28" height="31" rx="2"/>
</g>
<rect x="1142" y="1537.500" width="31" height="31" rx="2" fill="#5b636d"/>
<g text-anchor="middle" style="font-family:'Liberation Sans',sans-serif;font-size:14px;fill:#555">
<text x="1125" y="1558" fill="#888">‹</text>
<text x="1157.500" y="1558" style="fill:#fff">1</text>
<text x="1192.500" y="1558">2</text><text x="1227.500" y="1558">3</text><text x="1262" y="1558">4</text><text x="1296.500" y="1558">5</text>
<text x="1333" y="1558" style="fill:#eee">...</text>
<text x="1373" y="1558">37</text><text x="1410" y="1558" fill="#888">›</text>
</g>
</svg>
</body></html>
